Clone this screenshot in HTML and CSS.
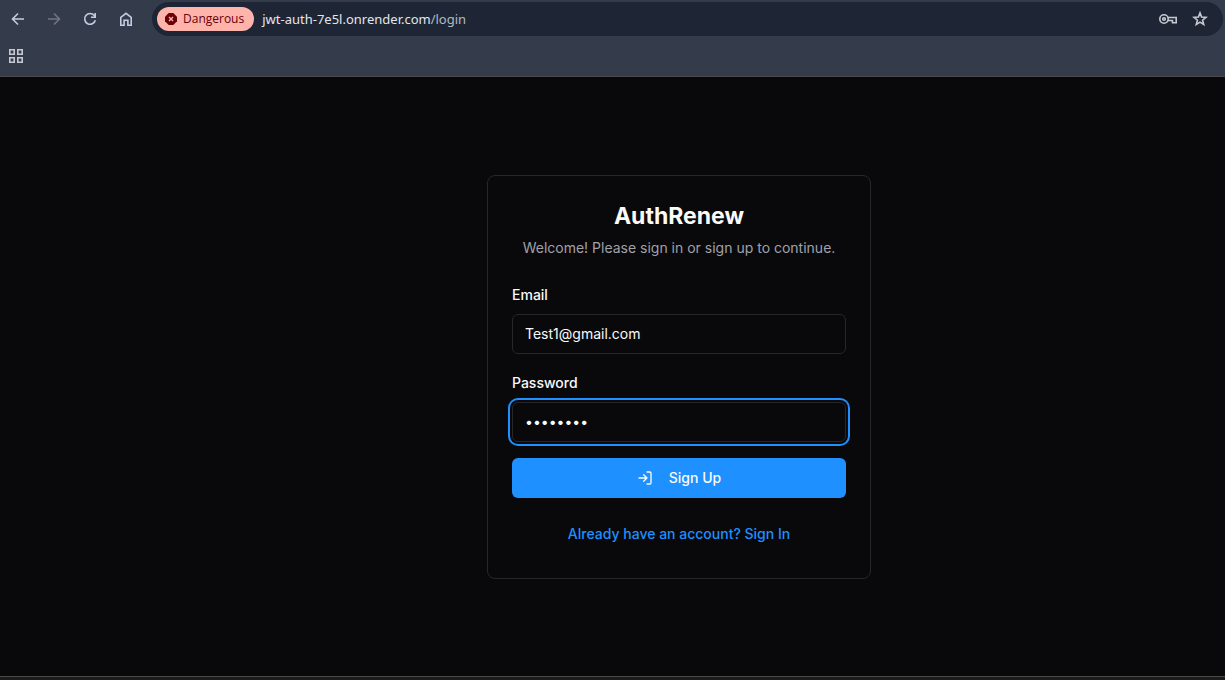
FILE: index.html
```html
<!DOCTYPE html>
<html lang="en">
<head>
<meta charset="utf-8">
<meta name="viewport" content="width=device-width, initial-scale=1">
<title>AuthRenew</title>
<link rel="stylesheet" href="styles.css">
</head>
<body>
<header class="browser">
  <div class="toolbar">
    <nav class="nav" aria-label="Browser navigation">
      <button class="icon-button" type="button" aria-label="Back">
        <svg width="16" height="16" viewBox="0 0 16 16"><path d="M14 8H3M8 2.500L2.500 8L8 13.500"/></svg>
      </button>
      <button class="icon-button icon-button-dim" type="button" aria-label="Forward">
        <svg width="16" height="16" viewBox="0 0 16 16"><path d="M2 8H13M8 2.500L13.500 8L8 13.500"/></svg>
      </button>
      <button class="icon-button" type="button" aria-label="Reload">
        <svg width="16" height="16" viewBox="0 0 16 16"><path d="M13.300 9.200A5.400 5.400 0 1 1 12.300 4.500L13.300 5.700"/><path d="M13.200 2V6.200H9"/></svg>
      </button>
      <button class="icon-button" type="button" aria-label="Home">
        <svg width="16" height="16" viewBox="0 0 16 16"><path d="M2.800 6.300L8 2.300L13.200 6.300V14.200H9.900V9.200H6.100V14.200H2.800Z"/></svg>
      </button>
    </nav>
    <div class="address">
      <button class="danger" type="button">
        <svg width="12" height="12" viewBox="0 0 12 12"><path class="danger-shape" d="M3.700 0H8.300L12 3.700V8.300L8.300 12H3.700L0 8.300V3.700Z"/><path class="danger-cross" d="M4 4L8 8M8 4L4 8"/></svg>
        <span>Dangerous</span>
      </button>
      <a class="url" href="#">jwt-auth-7e5l.onrender.com<span class="url-path">/login</span></a>
      <button class="icon-button icon-button-light" type="button" aria-label="Passwords">
        <svg width="20" height="16" viewBox="0 0 20 16"><circle cx="5" cy="8" r="4.200"/><circle cx="5" cy="8" r="1.300"/><path d="M9 6.500H17.200V11.700H13.500V9.500H9"/></svg>
      </button>
      <button class="icon-button icon-button-light" type="button" aria-label="Bookmark">
        <svg width="16" height="16" viewBox="0 0 16 16"><path d="M8 1.900L9.600 6.100L14 6.400L10.600 9.200L11.700 13.500L8 11.100L4.300 13.500L5.400 9.200L2 6.400L6.400 6.100Z"/></svg>
      </button>
    </div>
  </div>
  <div class="bookmarks">
    <button class="icon-button icon-button-light" type="button" aria-label="Apps">
      <svg width="16" height="16" viewBox="0 0 16 16"><path d="M1.800 1.800H6.200V6.200H1.800ZM9.800 1.800H14.200V6.200H9.800ZM1.800 9.800H6.200V14.200H1.800ZM9.800 9.800H14.200V14.200H9.800Z"/></svg>
    </button>
  </div>
</header>
<main class="page">
  <section class="card">
    <div class="card-header">
      <h1 class="title">AuthRenew</h1>
      <p class="subtitle">Welcome! Please sign in or sign up to continue.</p>
    </div>
    <form class="form">
      <div class="field">
        <label class="label" for="email">Email</label>
        <input class="input" id="email" type="email" value="Test1@gmail.com">
      </div>
      <div class="field">
        <label class="label" for="password">Password</label>
        <input class="input input-active" id="password" type="password" value="password">
      </div>
      <button class="submit" type="submit">
        <svg width="16" height="16" viewBox="0 0 24 24"><path d="M15 3h4a2 2 0 0 1 2 2v14a2 2 0 0 1-2 2h-4M10 17l5-5-5-5M15 12H3"/></svg>
        <span>Sign Up</span>
      </button>
    </form>
    <a class="switch" href="#">Already have an account? Sign In</a>
  </section>
</main>
<footer class="taskbar"></footer>
</body>
</html>
```
FILE: styles.css
```css
* {
  box-sizing: border-box;
}

body {
  margin: 0;
  min-height: 100vh;
  display: flex;
  flex-direction: column;
  background: #09090b;
  color: #fafafa;
  font-family: Inter, sans-serif;
  font-size: 14px;
  line-height: 20px;
}

button,
input {
  font: inherit;
  color: inherit;
}

button {
  border: 0;
  padding: 0;
  background: none;
  cursor: pointer;
}

svg {
  display: block;
  flex: none;
  fill: none;
  stroke: currentColor;
}

.browser {
  background: #343c4c;
  border-bottom: 1px solid #4a4a4d;
  font-family: "Noto Sans", sans-serif;
  font-size: 13px;
}

.toolbar {
  display: flex;
  align-items: center;
  gap: 18px;
  padding: 2px 2px 0 10px;
}

.nav {
  display: flex;
  gap: 20px;
}

.icon-button {
  color: #c3cbe2;
}

.icon-button svg {
  stroke-width: 1.6;
}

.icon-button-dim {
  color: #70767f;
}

.icon-button-light {
  color: #c7c9d2;
}

.address {
  flex: 1;
  display: flex;
  align-items: center;
  gap: 13px;
  height: 34px;
  padding: 0 15px 0 5px;
  border-radius: 17px;
  background: #1e2636;
}

.danger {
  display: flex;
  align-items: center;
  gap: 6px;
  height: 24px;
  padding: 0 10px 0 8px;
  border-radius: 12px;
  background: #ffb4ab;
  color: #690005;
  font-family: "Open Sans", sans-serif;
  font-size: 12px;
  font-weight: 500;
}

.danger-shape {
  fill: #690005;
  stroke: none;
}

.danger-cross {
  stroke: #ffb4ab;
  stroke-width: 1.4;
}

.url {
  flex: 1;
  margin-left: -5px;
  color: #e3e5ea;
  text-decoration: none;
}

.url-path {
  color: #b5b8c0;
}

.bookmarks {
  display: flex;
  align-items: center;
  height: 40px;
  padding: 0 8px;
}

.page {
  flex: 1;
  display: flex;
  align-items: center;
  justify-content: center;
  padding-left: 133px;
}

.card {
  width: 384px;
  display: flex;
  flex-direction: column;
  gap: 16px;
  padding: 24px;
  border: 1px solid #27272a;
  border-radius: 8px;
}

.card-header {
  display: flex;
  flex-direction: column;
  gap: 6px;
  padding-bottom: 8px;
  text-align: center;
}

.title {
  margin: 0;
  font-size: 23px;
  font-weight: 700;
  line-height: 32px;
}

.subtitle {
  margin: 0;
  color: #a1a1aa;
}

.form {
  display: flex;
  flex-direction: column;
  gap: 16px;
}

.field {
  display: flex;
  flex-direction: column;
  gap: 6px;
}

.label {
  font-weight: 500;
  line-height: 26px;
}

.input {
  width: 100%;
  height: 40px;
  padding: 8px 12px;
  border: 1px solid #27272a;
  border-radius: 6px;
  background: #09090b;
  outline: none;
}

.input-active {
  box-shadow: 0 0 0 2px #09090b, 0 0 0 4px #1e90ff;
}

.submit {
  display: flex;
  align-items: center;
  justify-content: center;
  gap: 16px;
  height: 40px;
  border-radius: 6px;
  background: #1e90ff;
  font-weight: 500;
}

.submit svg {
  stroke-width: 2;
  stroke-linecap: round;
  stroke-linejoin: round;
}

.switch {
  padding: 10px 0;
  color: #1e90ff;
  font-weight: 500;
  text-align: center;
  text-decoration: none;
}

.taskbar {
  height: 4px;
  border-top: 1px solid #4a4a4a;
  background: #1c1a1b;
}
```
